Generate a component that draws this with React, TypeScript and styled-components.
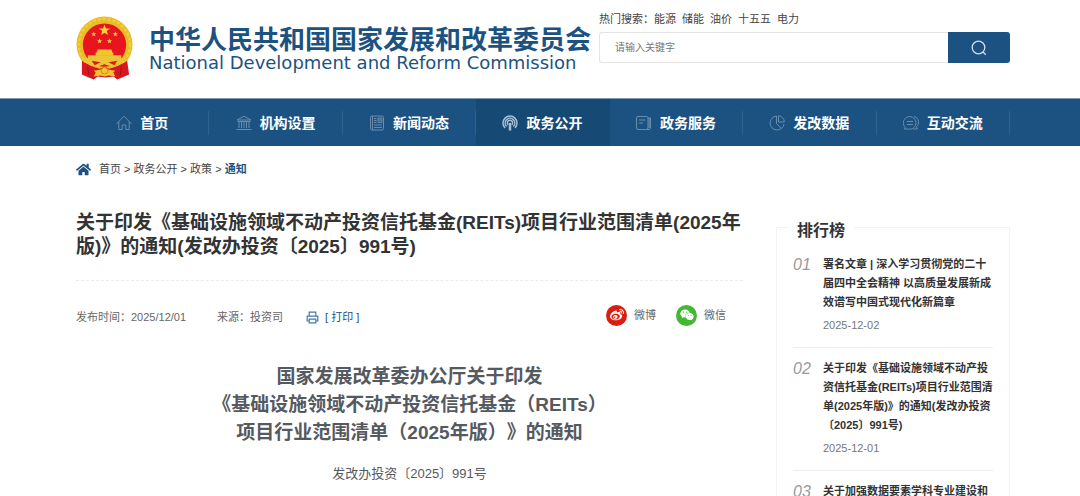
import React from "react";
import styled, { createGlobalStyle, css } from "styled-components";
import { FaHome, FaWeibo, FaWeixin } from "react-icons/fa";

const navy = "#1c5282";
const navyDark = "#164974";

const GlobalStyle = createGlobalStyle`
  *, *::before, *::after { box-sizing: border-box; }
  html { scrollbar-width: none; }
  body {
    margin: 0;
    background: #fff;
    color: #333;
    font-family: "Liberation Sans", "Noto Sans CJK SC", sans-serif;
    font-size: 11px;
    line-height: 18px;
    text-spacing-trim: space-all;
  }
  a { color: inherit; text-decoration: none; }
  h1, h2, h3, p, ol, ul { margin: 0; padding: 0; }
  ol, ul { list-style: none; }
  button, input { font: inherit; }
`;

const gutters = css`
  padding-left: 76px;
  padding-right: 70px;
`;

const Header = styled.header`
  ${gutters}
  display: flex;
  align-items: flex-start;
  gap: 8px;
  height: 98px;
`;

const Brand = styled.a`
  display: flex;
  flex: 1;
  min-width: 0;
  gap: 14px;
  padding-top: 15px;
  color: ${navy};
  white-space: nowrap;
`;

const BrandNames = styled.div`
  display: flex;
  flex-direction: column;
  padding-top: 12px;
`;

const BrandTitle = styled.span`
  font-size: 26px;
  font-weight: 700;
  line-height: 26px;
`;

const BrandSubtitle = styled.span`
  font-family: "DejaVu Sans", sans-serif;
  font-size: 18px;
  line-height: 20px;
`;

const SearchArea = styled.div`
  width: 411px;
  flex: none;
  padding-top: 10px;
`;

const HotWords = styled.div`
  display: flex;
  gap: 6px;
  margin-bottom: 4px;
  color: #444;
`;

const HotLabel = styled.span`
  margin-right: -6px;
`;

const SearchForm = styled.form`
  display: flex;
  height: 31px;
`;

const SearchInput = styled.input`
  flex: 1;
  min-width: 0;
  padding: 0 15px;
  border: 1px solid #e4e4e4;
  border-right: 0;
  border-radius: 3px 0 0 3px;
  font-size: 10px;
  outline: none;
  &::placeholder { color: #757575; opacity: 1; }
`;

const SearchButton = styled.button`
  display: flex;
  align-items: center;
  justify-content: center;
  width: 62px;
  padding: 0;
  border: 0;
  border-radius: 0 3px 3px 0;
  background: ${navy};
  color: #d3dfea;
`;

const NavBar = styled.nav`
  ${gutters}
  background: ${navy};
  border-top: 1px solid #7c9ab6;
`;

const NavList = styled.ul`
  display: flex;
`;

const NavItem = styled.li<{ $active?: boolean }>`
  flex: 1;
  display: flex;
  align-items: center;
  background: ${(p) => (p.$active ? navyDark : "transparent")};
  &::after {
    content: "";
    width: 1px;
    height: 24px;
    background: ${(p) => (p.$active ? "transparent" : "#2f628f")};
  }
`;

const NavLink = styled.a<{ $active?: boolean }>`
  flex: 1;
  display: flex;
  align-items: center;
  justify-content: center;
  gap: 8px;
  height: 47px;
  color: #fff;
  font-size: 14px;
  font-weight: 700;
  svg { color: ${(p) => (p.$active ? "#a9c0d4" : "#6a8dac")}; }
`;

const Breadcrumb = styled.nav`
  ${gutters}
  display: flex;
  align-items: center;
  gap: 8px;
  padding-top: 14px;
  color: #444;
  svg { color: ${navy}; }
  strong { color: ${navy}; }
`;

const Content = styled.main`
  ${gutters}
  display: flex;
  align-items: flex-start;
  gap: 33px;
`;

const Article = styled.article`
  flex: 1;
  min-width: 0;
  padding-top: 33px;
`;

const ArticleTitle = styled.h1`
  padding-bottom: 21px;
  border-bottom: 1px dashed #ececec;
  font-size: 19px;
  line-height: 24px;
  color: #333;
`;

const Meta = styled.div`
  display: flex;
  align-items: center;
  padding-top: 23px;
  color: #666;
`;

const MetaItem = styled.span`
  margin-right: 31px;
  padding-top: 4px;
`;

const PrintButton = styled.button`
  display: flex;
  align-items: center;
  gap: 6px;
  margin-left: -8px;
  padding: 4px 0 0;
  border: 0;
  background: none;
  color: ${navy};
`;

const ShareList = styled.div`
  display: flex;
  gap: 20px;
  margin-left: auto;
  padding-right: 17px;
`;

const ShareLink = styled.a`
  display: flex;
  align-items: center;
  gap: 7px;
`;

const ShareBadge = styled.span<{ $color: string }>`
  display: flex;
  align-items: center;
  justify-content: center;
  width: 21px;
  height: 21px;
  border-radius: 50%;
  background: ${(p) => p.$color};
  color: #fff;
`;

const DocTitle = styled.h2`
  padding-top: 37px;
  font-size: 19px;
  line-height: 28px;
  color: #555960;
  text-align: center;
`;

const DocNumber = styled.p`
  padding-top: 17px;
  color: #555960;
  font-size: 13px;
  line-height: 20px;
  text-align: center;
`;

const Ranking = styled.aside`
  flex: none;
  width: 234px;
  margin-top: 49px;
  padding: 0 16px;
  border: 1px solid #f3f3f3;
`;

const RankingTitle = styled.h2`
  width: 66px;
  margin: -8px 0 0 -5px;
  padding-left: 9px;
  background: #fff;
  font-size: 16px;
  line-height: 22px;
`;

const RankingList = styled.ol`
  padding-top: 2px;
`;

const RankingItem = styled.li`
  display: flex;
  padding: 11px 0 12px;
  border-bottom: 1px solid #eee;
  &:last-child { border-bottom: 0; }
`;

const RankNumber = styled.span`
  flex: none;
  width: 30px;
  color: #999;
  font-size: 16px;
  font-style: italic;
  line-height: 19px;
`;

const RankText = styled.div`
  flex: 1;
  line-height: 19px;
`;

const RankHeading = styled.h3`
  font-size: 11px;
  line-height: 19px;
`;

const RankDate = styled.time`
  display: block;
  padding-top: 4px;
  color: #777;
`;

const star = (cx: number, cy: number, r: number) =>
  Array.from({ length: 10 }, (_, i) => {
    const radius = i % 2 ? r * 0.4 : r;
    const a = (Math.PI / 5) * i - Math.PI / 2;
    return `${(cx + radius * Math.cos(a)).toFixed(2)},${(cy + radius * Math.sin(a)).toFixed(2)}`;
  }).join(" ");

const Emblem = () => (
  <svg width="60" height="65" viewBox="0 0 60 65" aria-hidden="true">
    <circle cx="29" cy="29.500" r="28.500" fill="#e9bd25" />
    <circle cx="29" cy="29.500" r="26" fill="none" stroke="#f0cf3e" strokeWidth="2.500" strokeDasharray="3 2" />
    <circle cx="29" cy="30" r="22" fill="#e8141f" />
    <polygon points={star(29, 15, 6)} fill="#f7d43a" />
    {[[18, 19], [40, 19], [24, 26], [34, 26]].map(([x, y]) => (
      <polygon key={x} points={star(x, y, 2.8)} fill="#f7d43a" />
    ))}
    <path d="M22 34.500h14l1 3h-16zM20 37.500h18v3.500H20z" fill="#f0c52f" />
    <path d="M6 46l9 5 9 3 5-2 5 2 9-3 9-5 2 14-7 3-5 2-4-3-8 1-8-1-4 3-5-2-7-3z" fill="#d8161f" />
    <path d="M12 40.500h34v3l6-1-2 5-12 5-9-3-9 3-12-5-2-5 6 1z" fill="#eec437" />
    <path d="M16 46l9 1.500-6 3zM42 46l-9 1.500 6 3z" fill="#e01720" />
    <path d="M12 52l1 9M46 52l-1 9" stroke="#a90f18" strokeWidth="1" />
    <path d="M18 56c5-1 7 0 11-4 4 4 6 3 11 4l-2 2 2 4-7-1-4 1-4-1-7 1 2-4z" fill="#f0c52f" />
    <circle cx="29" cy="56" r="3.500" fill="none" stroke="#c98f19" />
  </svg>
);

const NavSvg = ({ children }: { children: React.ReactNode }) => (
  <svg width="16" height="16" viewBox="0 0 16 16" fill="none" stroke="currentColor" strokeWidth="1" aria-hidden="true">
    {children}
  </svg>
);

const HomeIcon = () => (
  <NavSvg><path d="M.7 8.700L8 1.200l7.300 7.500M2.800 7v7.500h3.400V10h3.600v4.500h3.400V7" /></NavSvg>
);
const BankIcon = () => (
  <NavSvg><path d="M1 5l7-3.800L15 5zM1.500 6.500h13M3 7v6M5.500 7v6M8 7v6M10.500 7v6M13 7v6M.500 14.500h15" /></NavSvg>
);
const NewsIcon = () => (
  <NavSvg>
    <rect x="1.500" y="1" width="13" height="14" rx="1.500" />
    <path d="M3.500 1v14M5 3.500h2.500M5 5.500h2.500M5 7.500h2.500M5 10h8M5 12.500h8M9 3h4v4.500H9z" />
    <circle cx="11" cy="5" r="1" />
  </NavSvg>
);
const BroadcastIcon = () => (
  <NavSvg>
    <path d="M3 13a7 7 0 1 1 10 0M4.600 11.500a4.800 4.800 0 1 1 6.800 0M6.200 9.800a2.600 2.600 0 1 1 3.600 0" strokeWidth="1.500" />
    <path d="M8 8v7.500" strokeWidth="2.500" />
  </NavSvg>
);
const ServiceIcon = () => (
  <NavSvg>
    <rect x=".5" y="1.500" width="11.500" height="13" rx="1.500" />
    <path d="M3 5h6.500M3 8h4M12 3h2.500v10c0 1-.5 1.500-1.500 1.500h-2.500M13.200 3v10" />
  </NavSvg>
);
const PieIcon = () => (
  <NavSvg>
    <path d="M7.500 1A7 7 0 1 0 15 9M7.500 1v7.500l4.700 5" />
    <path d="M9.500.8v6.200h5.800A6.200 6.200 0 0 0 9.500.8z" />
  </NavSvg>
);
const ChatIcon = () => (
  <NavSvg>
    <path d="M2.300 12.500A6.300 6.300 0 1 1 5 14H1.300zM4 6.500h6M4 9.500h6M11 1.500c6 1.500 5 8.500 2.500 10l.8 2.500H10" />
  </NavSvg>
);

const SearchIcon = () => (
  <svg width="16" height="16" viewBox="0 0 16 16" fill="none" stroke="currentColor" strokeWidth="1.300" aria-hidden="true">
    <circle cx="7.500" cy="7.500" r="6.300" />
    <path d="M11.800 11.800l3 3" />
  </svg>
);

const PrintIcon = () => (
  <svg width="13" height="13" viewBox="0 0 13 13" fill="none" stroke="#4779a5" strokeWidth="1.200" aria-hidden="true">
    <path d="M3.200 5V1.200h6.600V5M3 10H1.200V5.200h10.600V10H10M3.200 8.200h6.600v3.600H3.200z" />
  </svg>
);

const navItems = [
  { label: "首页", Icon: HomeIcon },
  { label: "机构设置", Icon: BankIcon },
  { label: "新闻动态", Icon: NewsIcon },
  { label: "政务公开", Icon: BroadcastIcon, active: true },
  { label: "政务服务", Icon: ServiceIcon },
  { label: "发改数据", Icon: PieIcon },
  { label: "互动交流", Icon: ChatIcon },
];

const ranking = [
  { title: "署名文章 | 深入学习贯彻党的二十届四中全会精神 以高质量发展新成效谱写中国式现代化新篇章", date: "2025-12-02" },
  { title: "关于印发《基础设施领域不动产投资信托基金(REITs)项目行业范围清单(2025年版)》的通知(发改办投资〔2025〕991号)", date: "2025-12-01" },
  { title: "关于加强数据要素学科专业建设和" },
];

export default function App() {
  return (
    <>
      <GlobalStyle />
      <Header>
        <Brand href="#">
          <Emblem />
          <BrandNames>
            <BrandTitle>中华人民共和国国家发展和改革委员会</BrandTitle>
            <BrandSubtitle>National Development and Reform Commission</BrandSubtitle>
          </BrandNames>
        </Brand>
        <SearchArea>
          <HotWords>
            <HotLabel>热门搜索：</HotLabel>
            {["能源", "储能", "油价", "十五五", "电力"].map((word) => (
              <a href="#" key={word}>{word}</a>
            ))}
          </HotWords>
          <SearchForm>
            <SearchInput type="text" placeholder="请输入关键字" aria-label="请输入关键字" />
            <SearchButton type="button" aria-label="搜索"><SearchIcon /></SearchButton>
          </SearchForm>
        </SearchArea>
      </Header>
      <NavBar>
        <NavList>
          {navItems.map(({ label, Icon, active }) => (
            <NavItem key={label} $active={active}>
              <NavLink href="#" $active={active}><Icon />{label}</NavLink>
            </NavItem>
          ))}
        </NavList>
      </NavBar>
      <Breadcrumb>
        <FaHome size={15} />
        <span>
          <a href="#">首页</a> &gt; <a href="#">政务公开</a> &gt; <a href="#">政策</a> &gt; <a href="#"><strong>通知</strong></a>
        </span>
      </Breadcrumb>
      <Content>
        <Article>
          <ArticleTitle>
            关于印发《基础设施领域不动产投资信托基金(REITs)项目行业范围清单(2025年版)》的通知(发改办投资〔2025〕991号)
          </ArticleTitle>
          <Meta>
            <MetaItem>发布时间：2025/12/01</MetaItem>
            <MetaItem>来源：投资司</MetaItem>
            <PrintButton type="button"><PrintIcon />[ 打印 ]</PrintButton>
            <ShareList>
              <ShareLink href="#"><ShareBadge $color="#dc1c0c"><FaWeibo size={14} /></ShareBadge>微博</ShareLink>
              <ShareLink href="#"><ShareBadge $color="#43b931"><FaWeixin size={14} /></ShareBadge>微信</ShareLink>
            </ShareList>
          </Meta>
          <DocTitle>
            国家发展改革委办公厅关于印发<br />
            《基础设施领域不动产投资信托基金（REITs）<br />
            项目行业范围清单（2025年版）》的通知
          </DocTitle>
          <DocNumber>发改办投资〔2025〕991号</DocNumber>
        </Article>
        <Ranking>
          <RankingTitle>排行榜</RankingTitle>
          <RankingList>
            {ranking.map((item, i) => (
              <RankingItem key={item.title}>
                <RankNumber>{`0${i + 1}`}</RankNumber>
                <RankText>
                  <RankHeading><a href="#">{item.title}</a></RankHeading>
                  {item.date && <RankDate>{item.date}</RankDate>}
                </RankText>
              </RankingItem>
            ))}
          </RankingList>
        </Ranking>
      </Content>
    </>
  );
}
